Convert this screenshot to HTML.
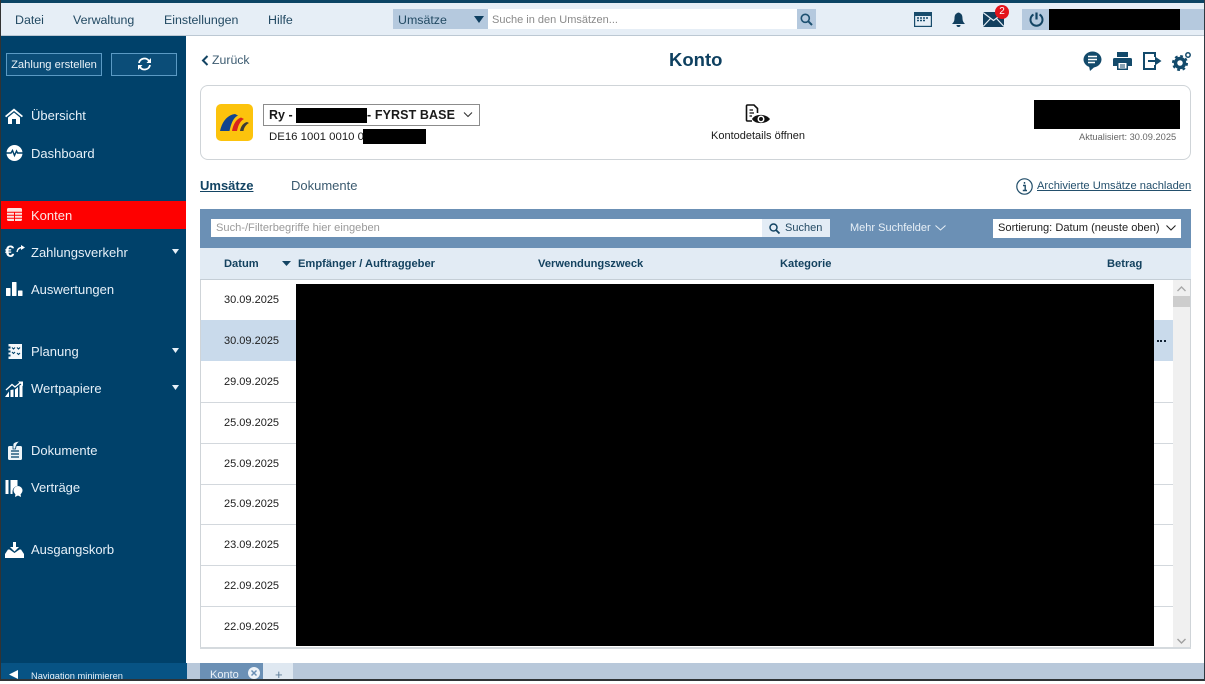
<!DOCTYPE html>
<html lang="de"><head><meta charset="utf-8"><title>Konto</title>
<style>
*{box-sizing:border-box}
html,body{margin:0;padding:0;width:1205px;height:681px;overflow:hidden;background:#fff;font-family:"Liberation Sans",Arial,sans-serif}
.a{position:absolute}
.t{position:absolute;white-space:nowrap;line-height:16px}
.nav{color:#e6f0f8;font-size:13px;left:31px}
.menu{color:#234a63;font-size:12.4px;top:12px}
.date{left:224px;font-size:11px;color:#1c1c1c}
.hd{font-size:11.15px;font-weight:bold;color:#14425f;top:256px}
.line{position:absolute;left:201px;width:972px;height:1px;background:#d3d8dd}
svg{position:absolute;overflow:visible}
</style></head><body>

<!-- top -->
<div class="a" style="left:0;top:0;width:1205px;height:3px;background:#0c4464"></div>
<div class="a" style="left:1px;top:3px;width:1203px;height:33px;background:#e6eef6;border-bottom:1px solid #bcc8d3"></div>
<div class="t menu" style="left:15px">Datei</div>
<div class="t menu" style="left:73px">Verwaltung</div>
<div class="t menu" style="left:164px">Einstellungen</div>
<div class="t menu" style="left:268px">Hilfe</div>

<div class="a" style="left:393px;top:9px;width:95px;height:20px;background:#b5c9de"></div>
<div class="t" style="left:398px;top:12px;font-size:12.4px;color:#234a63">Umsätze</div>
<svg style="left:474px;top:16px" width="10" height="7"><path d="M0 0H10L5 7Z" fill="#0f3f60"/></svg>
<div class="a" style="left:488px;top:9px;width:309px;height:20px;background:#fff"></div>
<div class="t" style="left:492px;top:12px;font-size:11px;color:#8a8a8a">Suche in den Umsätzen...</div>
<div class="a" style="left:797px;top:9px;width:19px;height:20px;background:#b5c9de"></div>
<svg style="left:800px;top:13px" width="13" height="13" viewBox="0 0 13 13"><circle cx="5.3" cy="5.3" r="4" fill="none" stroke="#1d5070" stroke-width="1.6"/><path d="M8.3 8.3L12 12" stroke="#1d5070" stroke-width="2"/></svg>

<svg style="left:914px;top:12px" width="18" height="15" viewBox="0 0 18 15"><rect x="0" y="0" width="18" height="15" fill="#194c6c"/><rect x="1.2" y="4" width="15.6" height="9.8" fill="#e6eef6"/><path d="M3 6h2M6 6h2M9 6h2M12 6h2M3 8.500h2M6 8.500h2M9 8.500h2" stroke="#194c6c" stroke-width="1.500"/></svg>
<svg style="left:951px;top:12px" width="15" height="15" viewBox="0 0 15 15"><path d="M7.500 0.500C10.800 1.500 11.500 3.500 11.500 6.500C11.500 9 12.500 10.500 14 12H1C2.500 10.500 3.500 9 3.500 6.500C3.500 3.500 4.200 1.500 7.500 0.500Z" fill="#123f5e"/><path d="M5.500 13h4a2 2 0 0 1-4 0Z" fill="#123f5e"/></svg>
<svg style="left:983px;top:12px" width="21" height="15" viewBox="0 0 21 15"><rect width="21" height="15" fill="#123f5e"/><path d="M0 0.500L10.500 8.500L21 0.500M0 14.500L7.500 6.500M21 14.500L13.500 6.500" stroke="#e6eef6" stroke-width="1.200" fill="none"/></svg>
<div class="a" style="left:995px;top:5px;width:14px;height:14px;border-radius:50%;background:#e4141c;color:#fff;font-size:10px;line-height:14px;text-align:center">2</div>

<div class="a" style="left:1022px;top:9px;width:27px;height:21px;background:#b5c9de"></div>
<svg style="left:1029px;top:12px" width="15" height="15" viewBox="0 0 15 15"><path d="M4.500 2.500a6 6 0 1 0 6 0" fill="none" stroke="#134463" stroke-width="2"/><path d="M7.500 0.500V7.500" stroke="#134463" stroke-width="2.200"/></svg>
<div class="a" style="left:1049px;top:9px;width:131px;height:21px;background:#000"></div>
<div class="a" style="left:1180px;top:9px;width:24px;height:21px;background:#b5c9de"></div>

<!-- sidebar -->
<div class="a" style="left:1px;top:36px;width:185px;height:628px;background:#00416a"></div>
<div class="a" style="left:0;top:0;width:1px;height:681px;background:#333"></div>
<div class="a" style="left:6px;top:53px;width:96px;height:23px;background:#0b4d78;border:1px solid #5b9ac4;color:#eaf2f8;font-size:11.2px;line-height:22px;text-align:center;white-space:nowrap">Zahlung erstellen</div>
<div class="a" style="left:111px;top:53px;width:66px;height:23px;background:#0b4d78;border:1px solid #5b9ac4"></div>
<svg style="left:137px;top:57px" width="15" height="14" viewBox="0 0 15 14"><path d="M2 6A5.500 5.500 0 0 1 12 4M13 8A5.500 5.500 0 0 1 3 10" fill="none" stroke="#fff" stroke-width="1.800"/><path d="M14 1V6H9.500ZM1 13V8H5.500Z" fill="#fff"/></svg>

<svg style="left:5px;top:108px" width="18" height="16" viewBox="0 0 18 16"><path d="M9 0.500L0 8L1.200 9.300L9 3L16.800 9.300L18 8Z" fill="#fff"/><path d="M3 9.500L9 4.500L15 9.500V16H11V11H7V16H3Z" fill="#fff"/></svg>
<div class="t nav" style="top:108px">Übersicht</div>
<svg style="left:6px;top:145px" width="17" height="16" viewBox="0 0 17 16"><circle cx="8.500" cy="8" r="8" fill="#fff"/><path d="M0 8H5L6.500 5.500L8.500 10.500L10.500 6L11.500 8H17" fill="none" stroke="#00416a" stroke-width="1.400"/></svg>
<div class="t nav" style="top:146px">Dashboard</div>

<div class="a" style="left:1px;top:201px;width:185px;height:28px;background:#fe0000"></div>
<svg style="left:7px;top:208px" width="15" height="13" viewBox="0 0 15 13"><rect width="15" height="13" rx="1.500" fill="#fbe4e0"/><path d="M0 4.200H15M0 7.200H15M0 10.200H15M7.500 4V13" stroke="#fe0000" stroke-width="1"/></svg>
<div class="t nav" style="top:208px;color:#fbe6e6">Konten</div>

<div class="t" style="left:5px;top:243px;font-size:17px;font-weight:bold;color:#fff;line-height:18px">€</div>
<svg style="left:16px;top:245px" width="9" height="9" viewBox="0 0 9 9"><path d="M1 7C1.500 4 3.500 2.500 6 2.500" fill="none" stroke="#fff" stroke-width="1.400"/><path d="M5 0L9 2.500L5 5Z" fill="#fff"/></svg>
<div class="t nav" style="top:245px">Zahlungsverkehr</div>
<svg style="left:172px;top:249px" width="7" height="5"><path d="M0 0H7L3.500 5Z" fill="#e6f0f8"/></svg>
<svg style="left:6px;top:282px" width="17" height="14" viewBox="0 0 17 14"><rect x="0" y="6" width="4.500" height="8" rx=".5" fill="#fff"/><rect x="6" y="0" width="4.500" height="14" rx=".5" fill="#fff"/><rect x="12" y="8.500" width="4.500" height="5.500" rx=".5" fill="#fff"/></svg>
<div class="t nav" style="top:282px">Auswertungen</div>

<svg style="left:7px;top:344px" width="15" height="15" viewBox="0 0 15 15"><path d="M1.500 0H15V15H1.500V12.500H3.500V10.500H1.500V8.500H3.500V6.500H1.500V4.500H3.500V2.500H1.500Z" fill="#f4f8fb"/><path d="M5 3.500L6.500 5L8 3.500M5 8L6.500 9.500L8 8M10 3.500L11.500 5L13 3.500M10 9L11.500 10.500L13 9" fill="none" stroke="#00416a" stroke-width="1.100"/></svg>
<div class="t nav" style="top:344px">Planung</div>
<svg style="left:172px;top:348px" width="7" height="5"><path d="M0 0H7L3.500 5Z" fill="#e6f0f8"/></svg>
<svg style="left:5px;top:381px" width="18" height="16" viewBox="0 0 18 16"><path d="M1 9L7 3.500L10 6L15.500 1.500" fill="none" stroke="#fff" stroke-width="1.300"/><path d="M13 0.500H18V5Z" fill="#fff"/><path d="M0 16L4 10.500V16ZM5.500 16V9L8.500 8.500V16ZM10 16V8.500L13 6V16ZM14.500 16V4.500L17.500 3V16Z" fill="#fff"/></svg>
<div class="t nav" style="top:381px">Wertpapiere</div>
<svg style="left:172px;top:385px" width="7" height="5"><path d="M0 0H7L3.500 5Z" fill="#e6f0f8"/></svg>

<svg style="left:6px;top:441px" width="17" height="19" viewBox="0 0 17 19"><path d="M3.500 5H14.500A1.500 1.500 0 0 1 16 6.500V17.500A1.500 1.500 0 0 1 14.500 19H3.500A1.500 1.500 0 0 1 2 17.500V6.500A1.500 1.500 0 0 1 3.500 5Z" fill="#eef4f8"/><path d="M5 10H13M5 13H13M5 16H13" stroke="#00416a" stroke-width="1.200"/><path d="M7 8L7 3.500C7 1.500 11 0 14 0.500C12 1.500 10 3 9.500 8Z" fill="#eef4f8" stroke="#00416a" stroke-width=".8"/></svg>
<div class="t nav" style="top:443px">Dokumente</div>
<svg style="left:5px;top:479px" width="18" height="18" viewBox="0 0 18 18"><rect x="0.500" y="1" width="3" height="14" fill="#fff"/><path d="M5.500 1H12.500V7C9 7.500 7.500 10 7.500 13V15H5.500Z" fill="#fff"/><circle cx="13" cy="11.500" r="4.500" fill="#fff"/><path d="M10.500 14.500L10 18L13 16.500L16 18L15.500 14.500Z" fill="#fff"/></svg>
<div class="t nav" style="top:480px">Verträge</div>
<svg style="left:5px;top:542px" width="19" height="16" viewBox="0 0 19 16"><path d="M8 0H11V5H14L9.500 9.500L5 5H8Z" fill="#fff"/><path d="M0 16V12L3 7.500H4.500L9.500 11L14.500 7.500H16L19 12V16Z" fill="#fff"/></svg>
<div class="t nav" style="top:542px">Ausgangskorb</div>

<div class="a" style="left:1px;top:663px;width:186px;height:16px;background:#075384"></div>
<svg style="left:9px;top:670px" width="9" height="9"><path d="M0 4.500L9 0V9Z" fill="#fff"/></svg>
<div class="t" style="left:31px;top:668px;font-size:9.3px;color:#e6f0f8">Navigation minimieren</div>

<!-- content head -->
<svg style="left:201px;top:55px" width="8" height="11" viewBox="0 0 8 11"><path d="M6.500 1L2 5.500L6.500 10" fill="none" stroke="#134463" stroke-width="2"/></svg>
<div class="t" style="left:212px;top:52px;font-size:12.3px;color:#3c5b70">Zurück</div>
<div class="t" style="left:669px;top:50px;font-size:18.500px;font-weight:bold;color:#0e4060;line-height:20px">Konto</div>

<svg style="left:1083px;top:51px" width="20" height="20" viewBox="0 0 20 20"><ellipse cx="9.500" cy="8.500" rx="9" ry="8" fill="#134a6b"/><path d="M6 15L7 20L12 15.500Z" fill="#134a6b"/><path d="M5 5.500H14M5 8.500H14M5 11.500H12" stroke="#fff" stroke-width="1.500"/></svg>
<svg style="left:1113px;top:52px" width="19" height="18" viewBox="0 0 19 18"><path d="M4 0H15V5H4Z" fill="#134a6b"/><path d="M1.500 6H17.500A1.500 1.500 0 0 1 19 7.500V14H15V18H4V14H0V7.500A1.500 1.500 0 0 1 1.500 6Z" fill="#134a6b"/><rect x="5.500" y="11" width="8" height="5.500" fill="#fff"/><path d="M7 13H12M7 15H12" stroke="#134a6b"/></svg>
<svg style="left:1143px;top:52px" width="19" height="18" viewBox="0 0 19 18"><path d="M12 5V1H1V17H12V13" fill="none" stroke="#134a6b" stroke-width="2"/><path d="M5 8H12V4.500L18.500 9L12 13.500V10H5Z" fill="#134a6b"/></svg>
<svg style="left:1172px;top:52px" width="19" height="18" viewBox="0 0 19 18"><circle cx="8" cy="11" r="4.500" fill="none" stroke="#134a6b" stroke-width="3.500"/><circle cx="8" cy="11" r="7" fill="none" stroke="#134a6b" stroke-width="2" stroke-dasharray="2.800 2.700"/><circle cx="16" cy="3" r="2.200" fill="none" stroke="#134a6b" stroke-width="1.500"/></svg>

<!-- account card -->
<div class="a" style="left:200px;top:85px;width:991px;height:75px;border:1px solid #cfd4d8;border-radius:8px;background:#fff"></div>
<svg style="left:216px;top:104px" width="37" height="37" viewBox="0 0 37 37"><rect width="37" height="37" rx="5" fill="#fcc30d"/><path d="M4 27C6 18 11 11 19 10L22 11.500C17 14 15 20 13.500 27Z" fill="#12448f"/><path d="M16 27C17 21 20 15 25 13.500L28 15C24 17 22 22 21 27Z" fill="#d9261c"/><path d="M24 27C24.500 23 27 19 31 18L33 19C30 20.500 28 23.500 27.500 27Z" fill="#3c3c38"/></svg>
<div class="a" style="left:263px;top:104px;width:217px;height:22px;border:1px solid #8c8c8c;background:#fff"></div>
<div class="t" style="left:269px;top:107px;font-size:12.5px;font-weight:bold;color:#1a1a1a">Ry -</div>
<div class="t" style="left:367px;top:107px;font-size:12.5px;font-weight:bold;color:#1a1a1a;letter-spacing:.1px">- FYRST BASE</div>
<div class="a" style="left:296px;top:108px;width:71px;height:15px;background:#000"></div>
<svg style="left:463px;top:112px" width="10" height="6" viewBox="0 0 10 6"><path d="M1 .5L5 4.500L9 .5" fill="none" stroke="#333" stroke-width="1.100"/></svg>
<div class="t" style="left:269px;top:129px;font-size:11.4px;color:#1a1a1a">DE16 1001 0010 0</div>
<div class="a" style="left:363px;top:129px;width:63px;height:15px;background:#000"></div>

<svg style="left:745px;top:104px" width="26" height="22" viewBox="0 0 26 22"><path d="M7 17H2.500Q1.500 17 1.500 16V2Q1.500 1 2.500 1H9L12.500 4.500V9" fill="none" stroke="#111" stroke-width="1.600"/><path d="M4.500 6H8M4.500 9H9M4.500 12H7" stroke="#111" stroke-width="1.300"/><path d="M7 15C10 9.500 21 9.500 25 15C21 20.500 10 20.500 7 15Z" fill="#111"/><circle cx="16" cy="15" r="3.500" fill="#fff"/><circle cx="16" cy="15" r="2" fill="#111"/></svg>
<div class="t" style="left:711px;top:128px;font-size:11px;color:#1a1a1a">Kontodetails öffnen</div>

<div class="a" style="left:1034px;top:100px;width:146px;height:29px;background:#000"></div>
<div class="t" style="left:1079px;top:129px;font-size:9.3px;color:#666">Aktualisiert: 30.09.2025</div>

<!-- tabs -->
<div class="t" style="left:200px;top:178px;font-size:13px;font-weight:bold;color:#134463;text-decoration:underline">Umsätze</div>
<div class="t" style="left:291px;top:178px;font-size:13px;color:#3c5b70">Dokumente</div>
<svg style="left:1016px;top:178px" width="17" height="17" viewBox="0 0 17 17"><circle cx="8.500" cy="8.500" r="7.700" fill="none" stroke="#1f4c68" stroke-width="1.200"/><path d="M7 7.500H9.200V12.500M6.800 12.500H11M8.500 4V5.800" fill="none" stroke="#1f4c68" stroke-width="1.400"/></svg>
<div class="t" style="left:1037px;top:178px;font-size:11.15px;color:#234f6c;text-decoration:underline">Archivierte Umsätze nachladen</div>

<!-- filter bar -->
<div class="a" style="left:200px;top:209px;width:991px;height:39px;background:#6b90b5"></div>
<div class="a" style="left:211px;top:219px;width:551px;height:18px;background:#fff"></div>
<div class="t" style="left:216px;top:220px;font-size:11.1px;color:#9a9a9a">Such-/Filterbegriffe hier eingeben</div>
<div class="a" style="left:762px;top:219px;width:68px;height:18px;background:#e3ecf5"></div>
<svg style="left:769px;top:223px" width="11" height="11" viewBox="0 0 11 11"><circle cx="4.500" cy="4.500" r="3.500" fill="none" stroke="#134463" stroke-width="1.500"/><path d="M7 7L10.500 10.500" stroke="#134463" stroke-width="1.800"/></svg>
<div class="t" style="left:785px;top:220px;font-size:11px;color:#234a63">Suchen</div>
<div class="t" style="left:850px;top:220px;font-size:11px;color:#e8f0f7">Mehr Suchfelder</div>
<svg style="left:935px;top:225px" width="11" height="6" viewBox="0 0 11 6"><path d="M.5 .5L5.500 5L10.500 .5" fill="none" stroke="#e8f0f7" stroke-width="1"/></svg>
<div class="a" style="left:993px;top:219px;width:188px;height:19px;background:#fff"></div>
<div class="t" style="left:998px;top:220px;font-size:11.1px;color:#222">Sortierung: Datum (neuste oben)</div>
<svg style="left:1166px;top:225px" width="10" height="6" viewBox="0 0 10 6"><path d="M.5 .5L5 5L9.500 .5" fill="none" stroke="#222" stroke-width="1.100"/></svg>

<!-- table -->
<div class="a" style="left:200px;top:248px;width:991px;height:32px;background:#e2ebf4;border-bottom:1px solid #c5ced6"></div>
<div class="t hd" style="left:224px">Datum</div>
<svg style="left:282px;top:261px" width="9" height="5"><path d="M0 0H9L4.500 5Z" fill="#134463"/></svg>
<div class="t hd" style="left:298px">Empfänger / Auftraggeber</div>
<div class="t hd" style="left:538px">Verwendungszweck</div>
<div class="t hd" style="left:780px">Kategorie</div>
<div class="t hd" style="left:1107px">Betrag</div>

<div class="a" style="left:200px;top:280px;width:1px;height:369px;background:#cfd4d8"></div>
<div class="a" style="left:1190px;top:280px;width:1px;height:369px;background:#cfd4d8"></div>
<div class="a" style="left:200px;top:647px;width:991px;height:2px;background:#d5dade"></div>

<div class="a" style="left:201px;top:320px;width:972px;height:41px;background:#c9daeb"></div>
<div class="line" style="top:402px"></div>
<div class="line" style="top:443px"></div>
<div class="line" style="top:484px"></div>
<div class="line" style="top:524px"></div>
<div class="line" style="top:565px"></div>
<div class="line" style="top:606px"></div>

<div class="t date" style="top:292px">30.09.2025</div>
<div class="t date" style="top:333px">30.09.2025</div>
<div class="t date" style="top:374px">29.09.2025</div>
<div class="t date" style="top:415px">25.09.2025</div>
<div class="t date" style="top:456px">25.09.2025</div>
<div class="t date" style="top:496px">25.09.2025</div>
<div class="t date" style="top:537px">23.09.2025</div>
<div class="t date" style="top:578px">22.09.2025</div>
<div class="t date" style="top:619px">22.09.2025</div>

<div class="a" style="left:1157px;top:340px;width:2px;height:2px;background:#123"></div>
<div class="a" style="left:1160px;top:340px;width:2px;height:2px;background:#123"></div>
<div class="a" style="left:1164px;top:340px;width:2px;height:2px;background:#123"></div>

<div class="a" style="left:296px;top:284px;width:858px;height:362px;background:#000"></div>

<!-- scrollbar -->
<div class="a" style="left:1173px;top:280px;width:17px;height:367px;background:#f0f0f0"></div>
<svg style="left:1177px;top:286px" width="9" height="6" viewBox="0 0 9 6"><path d="M.5 5L4.500 1L8.500 5" fill="none" stroke="#a8a8a8" stroke-width="1.400"/></svg>
<div class="a" style="left:1173px;top:296px;width:17px;height:11px;background:#cdcdcd"></div>
<svg style="left:1177px;top:638px" width="9" height="6" viewBox="0 0 9 6"><path d="M.5 1L4.500 5L8.500 1" fill="none" stroke="#a0a0a0" stroke-width="1.400"/></svg>

<!-- bottom tabs -->
<div class="a" style="left:187px;top:663px;width:1017px;height:16px;background:#b8c8da"></div>
<div class="a" style="left:200px;top:663px;width:63px;height:16px;background:#6b90b5"></div>
<div class="t" style="left:210px;top:667px;font-size:11px;color:#eaf1f7">Konto</div>
<svg style="left:248px;top:667px" width="12" height="12" viewBox="0 0 12 12"><circle cx="6" cy="6" r="6" fill="#eef3f8"/><path d="M3.500 3.500L8.500 8.500M8.500 3.500L3.500 8.500" stroke="#6b90b5" stroke-width="1.500"/></svg>
<div class="a" style="left:263px;top:663px;width:30px;height:16px;background:#dfe8f1"></div>
<div class="t" style="left:275px;top:667px;font-size:13px;color:#5c7c98">+</div>

<div class="a" style="left:0;top:679px;width:1205px;height:2px;background:#2f3336"></div>
<div class="a" style="left:1204px;top:0;width:1px;height:681px;background:#2f3a42"></div>
</body></html>
